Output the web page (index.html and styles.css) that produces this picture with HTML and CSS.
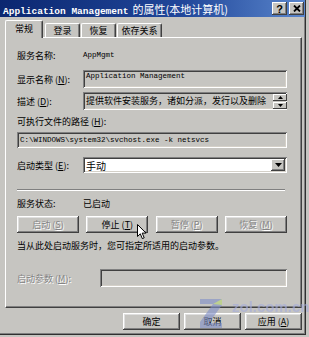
FILE: index.html
```html
<!DOCTYPE html>
<html lang="zh-CN">
<head>
  <meta charset="UTF-8">
  <title>Application Management 的属性</title>
  <link rel="stylesheet" href="styles.css">
</head>
<body>
  <div class="window">
    <div class="titlebar">
      <div class="title">
        <span class="title-en">Application Management</span>
        <span class="title-cn">的属性(本地计算机)</span>
      </div>
      <div class="caption-buttons">
        <span class="cap-btn">?</span>
        <span class="cap-btn">
          <svg width="8" height="7" viewBox="0 0 8 7"><path d="M1 0.5 L7 6.5 M7 0.5 L1 6.5" stroke="#000" stroke-width="1.8"/></svg>
        </span>
      </div>
    </div>

    <div class="tabs">
      <div class="tab active">常规</div>
      <div class="tab tab-login">登录</div>
      <div class="tab tab-recover">恢复</div>
      <div class="tab tab-deps">依存关系</div>
    </div>

    <div class="panel">
      <div class="row row-name">
        <span class="label">服务名称:</span>
        <span class="value mono">AppMgmt</span>
      </div>
      <div class="row row-display">
        <span class="label">显示名称 (<u>N</u>):</span>
        <div class="field sunken mono top">Application Management</div>
      </div>
      <div class="row row-desc">
        <span class="label">描述 (<u>D</u>):</span>
        <div class="field sunken top desc">
          <span class="desc-text">提供软件安装服务，诸如分派，发行以及删除</span>
          <div class="spin">
            <span class="spin-btn"><svg width="5" height="3" viewBox="0 0 5 3"><path d="M0 3 L2.5 0 L5 3 Z" fill="#000"/></svg></span>
            <span class="spin-btn"><svg width="5" height="3" viewBox="0 0 5 3"><path d="M0 0 L2.5 3 L5 0 Z" fill="#000"/></svg></span>
          </div>
        </div>
      </div>
      <div class="row row-pathlabel">
        <span>可执行文件的路径 (<u>H</u>):</span>
      </div>
      <div class="row row-path">
        <div class="field sunken mono">C:\WINDOWS\system32\svchost.exe -k netsvcs</div>
      </div>
      <div class="row row-type">
        <span class="label">启动类型 (<u>E</u>):</span>
        <div class="field sunken combo">
          <span class="combo-text">手动</span>
          <span class="combo-btn"><svg width="7" height="4" viewBox="0 0 7 4"><path d="M0 0 L7 0 L3.5 4 Z" fill="#000"/></svg></span>
        </div>
      </div>
      <div class="separator"></div>
      <div class="row row-status">
        <span class="label">服务状态:</span>
        <span class="value">已启动</span>
      </div>
      <div class="row row-buttons">
        <span class="btn disabled">启动 (<u>S</u>)</span>
        <span class="btn">停止 (<u>T</u>)</span>
        <span class="btn disabled">暂停 (<u>P</u>)</span>
        <span class="btn disabled">恢复 (<u>M</u>)</span>
      </div>
      <div class="row row-hint">
        <span>当从此处启动服务时，您可指定所适用的启动参数。</span>
      </div>
      <div class="row row-params">
        <span class="label wide disabled-text">启动参数 (<u>M</u>):</span>
        <div class="field sunken"></div>
      </div>
    </div>

    <div class="footer">
      <span class="btn footer-btn">确定</span>
      <span class="btn footer-btn">取消</span>
      <span class="btn footer-btn">应用 (<u>A</u>)</span>
    </div>

    <svg class="cursor" width="10" height="16" viewBox="0 0 10 16">
      <path d="M0.5 0.5 L0.5 12.5 L3.3 9.8 L5.3 14.6 L7.2 13.8 L5.2 9.1 L9 9.1 Z" fill="#fff" stroke="#000" stroke-width="1"/>
    </svg>

    <!-- site watermark from the original capture -->
    <div class="watermark">
      <svg class="wm-logo" width="26" height="32" viewBox="0 0 26 32">
        <path d="M2 2 L24 2 L24 8 L11 26 L24 26 L24 31 L2 31 L2 25 L15 7 L2 7 Z" fill="#7f8fc8"/>
        <path d="M15 7 L24 2 L24 8 Z" fill="#b8d870"/>
      </svg>
      <span class="wm-site">zol.com.cn</span>
    </div>
  </div>
</body>
</html>
```

FILE: styles.css
```css
body {
  margin: 0;
  background: #c6c5c1;
  font-family: "Noto Sans CJK SC", sans-serif;
  font-size: 9px;
  color: #000;
}
.window {
  position: relative;
  width: 306px;
  height: 335px;
  box-sizing: border-box;
  border-right: 1px solid #303030;
  border-bottom: 1px solid #303030;
  box-shadow: inset -1px -1px #808080;
}
.titlebar {
  height: 17px;
  display: flex;
  align-items: center;
  justify-content: space-between;
  background: linear-gradient(to right, #0b2770, #21479a 60%, #5a86cc);
  color: #fff;
}
.title {
  padding-left: 3px;
  display: flex;
  align-items: baseline;
  gap: 4px;
  white-space: nowrap;
}
.title-en {
  font-family: "Liberation Mono", monospace;
  font-size: 9.5px;
  font-weight: bold;
}
.title-cn {
  font-size: 11px;
}
.caption-buttons {
  display: flex;
  gap: 2px;
  margin-right: 1px;
}
.cap-btn {
  width: 15px;
  height: 13px;
  background: #c6c5c1;
  box-shadow: inset -1px -1px #404040, inset 1px 1px #fff, inset -2px -2px #808080;
  display: flex;
  align-items: center;
  justify-content: center;
  color: #000;
  font-family: "Liberation Sans", sans-serif;
  font-weight: bold;
  font-size: 11px;
}
.tabs {
  display: flex;
  align-items: flex-end;
  height: 16px;
  margin-top: 4px;
  padding-left: 5px;
}
.tab {
  height: 14px;
  box-sizing: border-box;
  border-top: 1px solid #fff;
  border-left: 1px solid #fff;
  border-right: 1px solid #404040;
  border-radius: 2px 2px 0 0;
  box-shadow: inset -1px 0 #808080;
  display: flex;
  align-items: center;
  justify-content: center;
  background: #c6c5c1;
}
.tab.active {
  position: relative;
  z-index: 1;
  width: 38px;
  height: 18px;
  margin-bottom: -1px;
  padding-bottom: 2px;
}
.tab-login {
  width: 35px;
  margin-left: 2px;
}
.tab-recover {
  width: 35px;
  margin-left: 1px;
}
.tab-deps {
  width: 45px;
  margin-left: 1px;
}
.panel {
  margin-left: 5px;
  width: 297px;
  height: 271px;
  box-sizing: border-box;
  border: 1px solid;
  border-color: #fff #404040 #404040 #fff;
  box-shadow: inset -1px -1px #808080;
  padding: 8px 14px 0 11px;
}
.row {
  display: flex;
  align-items: center;
  height: 16px;
}
.row-name { height: 18px; }
.row-display { height: 18px; margin-top: 6px; }
.row-desc { height: 18px; margin-top: 4px; }
.row-pathlabel { margin-top: 3px; }
.row-path { margin-top: 3px; }
.row-type { margin-top: 9px; }
.row-status { margin-top: 4px; }
.row-buttons {
  height: 17px;
  margin-top: 5px;
  justify-content: space-between;
}
.row-hint { margin-top: 4px; }
.row-params { height: 18px; margin-top: 16px; }
.label {
  width: 66px;
  flex-shrink: 0;
  white-space: nowrap;
}
.label.wide {
  width: 83px;
}
.mono {
  font-family: "Liberation Mono", monospace;
  font-size: 7.5px;
}
.field {
  flex: 1;
  height: 100%;
  box-sizing: border-box;
  padding-left: 3px;
  display: flex;
  align-items: center;
  white-space: nowrap;
  overflow: hidden;
}
.field.top {
  align-items: flex-start;
  padding-top: 2px;
}
.sunken {
  box-shadow: inset 1px 1px #808080, inset -1px -1px #fff, inset 2px 2px #404040, inset -2px -2px #d4d0c8;
}
.desc {
  justify-content: space-between;
  padding-top: 1px;
}
.spin {
  display: flex;
  flex-direction: column;
  gap: 1px;
}
.spin-btn {
  width: 14px;
  height: 7px;
  background: #c6c5c1;
  box-shadow: inset -1px -1px #404040, inset 1px 1px #fff;
  display: flex;
  align-items: center;
  justify-content: center;
}
.combo {
  background: #fff;
  justify-content: space-between;
  padding-right: 2px;
}
.combo-text {
  font-size: 10px;
}
.combo-btn {
  width: 14px;
  height: 12px;
  background: #c6c5c1;
  box-shadow: inset -1px -1px #404040, inset 1px 1px #fff, inset -2px -2px #808080;
  display: flex;
  align-items: center;
  justify-content: center;
}
.separator {
  height: 2px;
  margin-top: 16px;
  margin-right: 2px;
  border-top: 1px solid #808080;
  border-bottom: 1px solid #fff;
  box-sizing: border-box;
}
.btn {
  width: 62px;
  height: 17px;
  background: #c6c5c1;
  box-shadow: inset -1px -1px #404040, inset 1px 1px #fff, inset -2px -2px #808080, inset 2px 2px #dfdfdf;
  display: flex;
  align-items: center;
  justify-content: center;
  white-space: nowrap;
}
.btn.disabled,
.disabled-text {
  color: #848484;
  text-shadow: 1px 1px #fff;
}
.footer {
  display: flex;
  justify-content: flex-end;
  gap: 4px;
  margin-top: 5px;
  padding-right: 3px;
}
.footer-btn {
  width: 57px;
}
.cursor {
  position: absolute;
  left: 137px;
  top: 224px;
}
.watermark {
  position: absolute;
  left: 198px;
  top: 297px;
  display: flex;
  align-items: flex-start;
  gap: 8px;
  opacity: 0.6;
  pointer-events: none;
}
.wm-site {
  margin-top: 3px;
  font-family: "Liberation Sans", sans-serif;
  font-size: 15px;
  line-height: 13px;
  font-weight: bold;
  color: #a4acdc;
}
```
